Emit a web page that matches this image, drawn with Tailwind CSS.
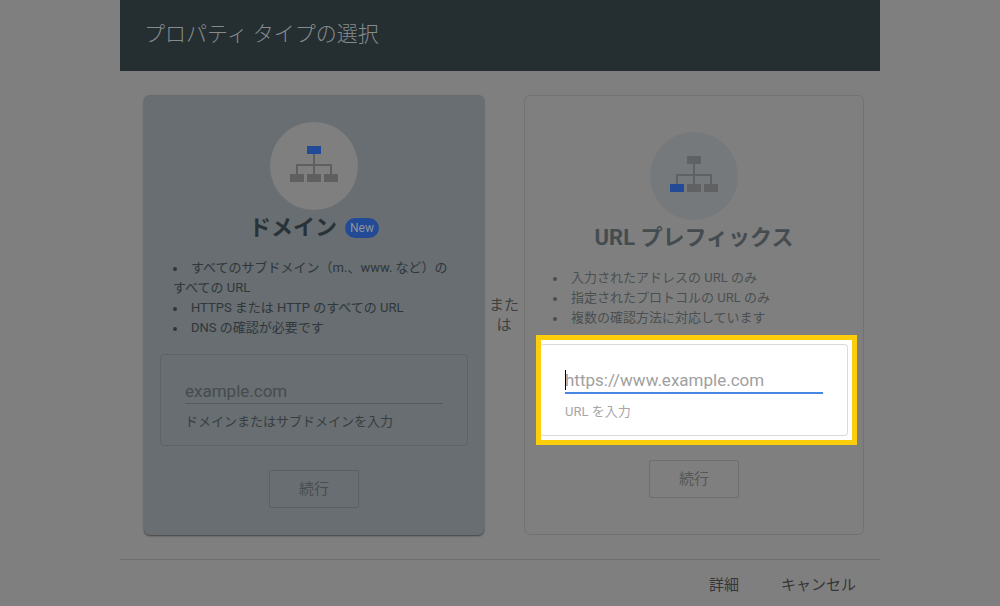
<!DOCTYPE html>
<html lang="ja">
<head>
<meta charset="utf-8">
<meta name="viewport" content="width=device-width, initial-scale=1">
<title>プロパティ タイプの選択</title>
<script src="https://cdn.jsdelivr.net/npm/@tailwindcss/browser@4"></script>
</head>
<body class="min-h-screen overflow-x-hidden bg-[#7f7f7f] font-['Roboto','Noto_Sans_CJK_JP',sans-serif] text-[13px] leading-5 text-[#30373a]">
<main class="mx-auto max-w-[760px]">
  <header class="flex h-[71px] items-center bg-[#252e31] px-6 pb-1">
    <h1 class="text-[21px] leading-8 font-light text-[#858b8d]">プロパティ タイプの選択</h1>
  </header>

  <div class="flex pt-6 pr-4 pb-6 pl-6">
    <section class="flex min-h-[440px] flex-1 flex-col justify-center rounded-md bg-[#686e71] px-4 shadow-[0_1px_2px_rgba(0,0,0,0.5)]">
      <svg class="mx-auto size-[88px] shrink-0" viewBox="0 0 88 88" aria-hidden="true">
        <circle cx="44" cy="44" r="44" fill="#7f7f7f"/>
        <path d="M44 32v20M27 52v-9h34v9" fill="none" stroke="#5f5f5f" stroke-width="2"/>
        <path d="M20 52h14v8H20zM37 52h14v8H37zM54 52h14v8H54z" fill="#5f5f5f"/>
        <path d="M37 24h14v8H37z" fill="#234a96"/>
      </svg>
      <div class="flex h-9 items-center justify-center gap-2">
        <h2 class="text-[22px] leading-8 font-bold text-[#293236]">ドメイン</h2>
        <span class="rounded-full bg-[#234a96] px-[5px] text-xs leading-5 text-[#8f9499]">New</span>
      </div>
      <ul class="mt-3 px-[13px] text-[#2f373a]">
        <li><span class="mr-3.5 inline-block size-1 rounded-full bg-current align-middle"></span>すべてのサブドメイン（m.、www. など）のすべての URL</li>
        <li><span class="mr-3.5 inline-block size-1 rounded-full bg-current align-middle"></span>HTTPS または HTTP のすべての URL</li>
        <li><span class="mr-3.5 inline-block size-1 rounded-full bg-current align-middle"></span>DNS の確認が必要です</li>
      </ul>
      <div class="mt-4 rounded border border-[#5e6366] px-6 pt-[23px] pb-[13px]">
        <input id="domain" type="text" placeholder="example.com" class="block h-[26px] w-full border-b border-[#565b5e] bg-transparent text-[17px] text-[#30373a] outline-none placeholder:text-[#464b4e]">
        <label for="domain" class="mt-2 block text-[#373d40]">ドメインまたはサブドメインを入力</label>
      </div>
      <button type="button" class="mx-auto mt-6 h-[38px] w-[90px] shrink-0 rounded-xs border border-[#5b6063] text-[15px] text-[#484d50]">続行</button>
    </section>

    <p class="flex w-10 shrink-0 items-center justify-center text-center text-[15px] leading-5 text-[#404040]"><span class="w-8">または</span></p>

    <section class="flex min-h-[440px] flex-1 flex-col justify-center rounded-md border border-[#727272] px-[15px]">
      <svg class="mx-auto size-[88px] shrink-0" viewBox="0 0 88 88" aria-hidden="true">
        <circle cx="44" cy="44" r="44" fill="#76797b"/>
        <path d="M44 32v20M27 52v-9h34v9" fill="none" stroke="#606162" stroke-width="2"/>
        <path d="M37 24h14v8H37zM37 52h14v8H37zM54 52h14v8H54z" fill="#606162"/>
        <path d="M20 52h14v8H20z" fill="#234a96"/>
      </svg>
      <h2 class="flex h-9 items-center justify-center text-[22px] leading-8 font-bold text-[#454c4f]">URL プレフィックス</h2>
      <ul class="mt-3 px-[13px] text-[#4a4f51]">
        <li><span class="mr-3.5 inline-block size-1 rounded-full bg-current align-middle"></span>入力されたアドレスの URL のみ</li>
        <li><span class="mr-3.5 inline-block size-1 rounded-full bg-current align-middle"></span>指定されたプロトコルの URL のみ</li>
        <li><span class="mr-3.5 inline-block size-1 rounded-full bg-current align-middle"></span>複数の確認方法に対応しています</li>
      </ul>
      <div class="relative mt-4">
        <div class="absolute -top-[9px] -right-[9px] -bottom-[9px] -left-1 border-5 border-[#fccd0a] bg-white"></div>
        <div class="relative rounded border border-l-transparent border-[#dadada] px-6 pt-[23px] pb-[13px]">
          <span class="absolute top-[25px] left-6 h-5 w-px bg-black"></span>
          <input id="prefix" type="text" placeholder="https://www.example.com" class="block h-[26px] w-full border-b-2 border-[#4688e4] bg-transparent text-[17px] text-[#333333] outline-none placeholder:text-[#a0a0a0]">
          <label for="prefix" class="mt-2 block text-[#a6a6a6]">URL を入力</label>
        </div>
      </div>
      <button type="button" class="mx-auto mt-6 h-[38px] w-[90px] shrink-0 rounded-xs border border-[#6e6e6e] text-[15px] text-[#565656]">続行</button>
    </section>
  </div>

  <footer class="flex justify-end gap-[42px] border-t border-[#6e6e6e] px-6 pt-[15px] text-[15px] leading-5 text-[#363636]">
    <button type="button">詳細</button>
    <button type="button">キャンセル</button>
  </footer>
</main>
</body>
</html>
